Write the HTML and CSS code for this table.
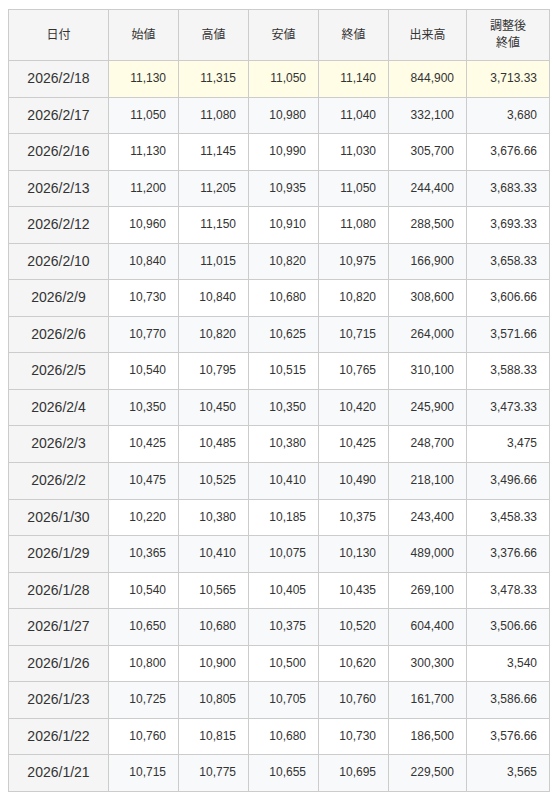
FILE: index.html
```html
<!DOCTYPE html>
<html lang="ja">
<head>
<meta charset="utf-8">
<link rel="stylesheet" href="styles.css">
</head>
<body>
<table class="prices">
  <colgroup>
    <col class="c-date"><col class="c-num"><col class="c-num"><col class="c-num"><col class="c-num"><col class="c-vol"><col class="c-adj">
  </colgroup>
  <thead>
    <tr><th>日付</th><th>始値</th><th>高値</th><th>安値</th><th>終値</th><th>出来高</th><th>調整後<br>終値</th></tr>
  </thead>
  <tbody>
    <tr class="latest"><td>2026/2/18</td><td>11,130</td><td>11,315</td><td>11,050</td><td>11,140</td><td>844,900</td><td>3,713.33</td></tr>
    <tr><td>2026/2/17</td><td>11,050</td><td>11,080</td><td>10,980</td><td>11,040</td><td>332,100</td><td>3,680</td></tr>
    <tr><td>2026/2/16</td><td>11,130</td><td>11,145</td><td>10,990</td><td>11,030</td><td>305,700</td><td>3,676.66</td></tr>
    <tr><td>2026/2/13</td><td>11,200</td><td>11,205</td><td>10,935</td><td>11,050</td><td>244,400</td><td>3,683.33</td></tr>
    <tr><td>2026/2/12</td><td>10,960</td><td>11,150</td><td>10,910</td><td>11,080</td><td>288,500</td><td>3,693.33</td></tr>
    <tr><td>2026/2/10</td><td>10,840</td><td>11,015</td><td>10,820</td><td>10,975</td><td>166,900</td><td>3,658.33</td></tr>
    <tr><td>2026/2/9</td><td>10,730</td><td>10,840</td><td>10,680</td><td>10,820</td><td>308,600</td><td>3,606.66</td></tr>
    <tr><td>2026/2/6</td><td>10,770</td><td>10,820</td><td>10,625</td><td>10,715</td><td>264,000</td><td>3,571.66</td></tr>
    <tr><td>2026/2/5</td><td>10,540</td><td>10,795</td><td>10,515</td><td>10,765</td><td>310,100</td><td>3,588.33</td></tr>
    <tr><td>2026/2/4</td><td>10,350</td><td>10,450</td><td>10,350</td><td>10,420</td><td>245,900</td><td>3,473.33</td></tr>
    <tr><td>2026/2/3</td><td>10,425</td><td>10,485</td><td>10,380</td><td>10,425</td><td>248,700</td><td>3,475</td></tr>
    <tr><td>2026/2/2</td><td>10,475</td><td>10,525</td><td>10,410</td><td>10,490</td><td>218,100</td><td>3,496.66</td></tr>
    <tr><td>2026/1/30</td><td>10,220</td><td>10,380</td><td>10,185</td><td>10,375</td><td>243,400</td><td>3,458.33</td></tr>
    <tr><td>2026/1/29</td><td>10,365</td><td>10,410</td><td>10,075</td><td>10,130</td><td>489,000</td><td>3,376.66</td></tr>
    <tr><td>2026/1/28</td><td>10,540</td><td>10,565</td><td>10,405</td><td>10,435</td><td>269,100</td><td>3,478.33</td></tr>
    <tr><td>2026/1/27</td><td>10,650</td><td>10,680</td><td>10,375</td><td>10,520</td><td>604,400</td><td>3,506.66</td></tr>
    <tr><td>2026/1/26</td><td>10,800</td><td>10,900</td><td>10,500</td><td>10,620</td><td>300,300</td><td>3,540</td></tr>
    <tr><td>2026/1/23</td><td>10,725</td><td>10,805</td><td>10,705</td><td>10,760</td><td>161,700</td><td>3,586.66</td></tr>
    <tr><td>2026/1/22</td><td>10,760</td><td>10,815</td><td>10,680</td><td>10,730</td><td>186,500</td><td>3,576.66</td></tr>
    <tr><td>2026/1/21</td><td>10,715</td><td>10,775</td><td>10,655</td><td>10,695</td><td>229,500</td><td>3,565</td></tr>
  </tbody>
</table>
</body>
</html>
```

FILE: styles.css
```css
html, body {
  background: #ffffff;
}
body {
  margin: 9px 0 0 8px;
  font-family: "Liberation Sans", Arial, "Noto Sans CJK JP", sans-serif;
  font-size: 12px;
  color: #333333;
}
.prices {
  border-collapse: collapse;
  table-layout: fixed;
  width: 541px;
}
.c-date { width: 100px; }
.c-num { width: 70px; }
.c-vol { width: 78px; }
.c-adj { width: 83px; }
.prices th,
.prices td {
  border: 1px solid #cccccc;
  padding: 8px 12px 8px 8px;
}
.prices th {
  background: #f5f5f5;
  font-weight: normal;
  text-align: center;
  line-height: 17px;
  padding: 8px 4px;
  height: 34px;
}
.prices td {
  text-align: right;
  line-height: 19.55px;
}
.prices tbody tr:nth-child(even) td {
  background: #f8f9fa;
}
.prices tbody tr:nth-child(odd) td {
  background: #ffffff;
}
.prices tbody td:first-child,
.prices tbody tr:nth-child(even) td:first-child,
.prices tbody tr:nth-child(odd) td:first-child {
  background: #f5f5f5;
  text-align: center;
  font-size: 14px;
  padding: 8px 4px;
}
.prices tbody tr.latest td {
  background: #fffde6;
}
.prices tbody tr.latest td:first-child {
  background: #f5f5f5;
}
```
